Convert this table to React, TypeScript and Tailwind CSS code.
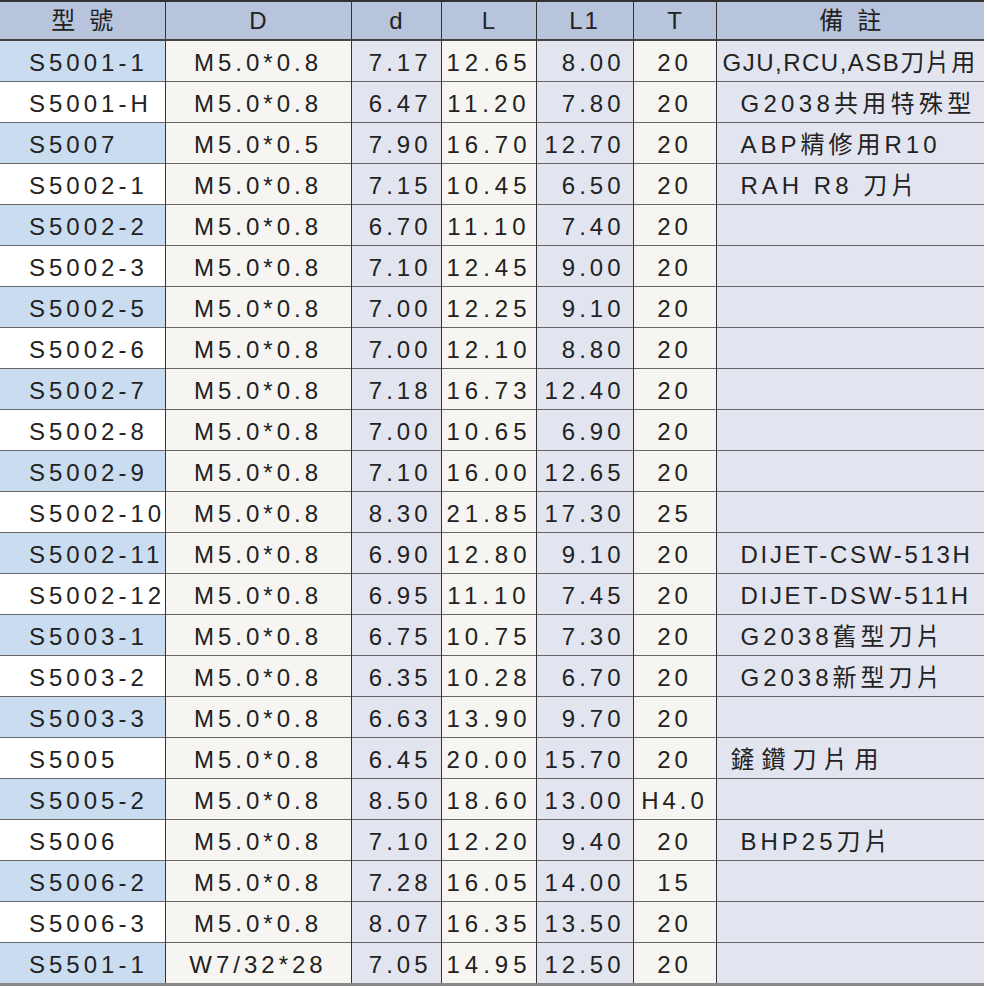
const rows: [string, string, string, string, string, string, string][] = [
  ["S5001-1", "M5.0*0.8", "7.17", "12.65", "8.00", "20", "GJU,RCU,ASB刀片用"],
  ["S5001-H", "M5.0*0.8", "6.47", "11.20", "7.80", "20", "G2038共用特殊型"],
  ["S5007", "M5.0*0.5", "7.90", "16.70", "12.70", "20", "ABP精修用R10"],
  ["S5002-1", "M5.0*0.8", "7.15", "10.45", "6.50", "20", "RAH R8 刀片"],
  ["S5002-2", "M5.0*0.8", "6.70", "11.10", "7.40", "20", ""],
  ["S5002-3", "M5.0*0.8", "7.10", "12.45", "9.00", "20", ""],
  ["S5002-5", "M5.0*0.8", "7.00", "12.25", "9.10", "20", ""],
  ["S5002-6", "M5.0*0.8", "7.00", "12.10", "8.80", "20", ""],
  ["S5002-7", "M5.0*0.8", "7.18", "16.73", "12.40", "20", ""],
  ["S5002-8", "M5.0*0.8", "7.00", "10.65", "6.90", "20", ""],
  ["S5002-9", "M5.0*0.8", "7.10", "16.00", "12.65", "20", ""],
  ["S5002-10", "M5.0*0.8", "8.30", "21.85", "17.30", "25", ""],
  ["S5002-11", "M5.0*0.8", "6.90", "12.80", "9.10", "20", "DIJET-CSW-513H"],
  ["S5002-12", "M5.0*0.8", "6.95", "11.10", "7.45", "20", "DIJET-DSW-511H"],
  ["S5003-1", "M5.0*0.8", "6.75", "10.75", "7.30", "20", "G2038舊型刀片"],
  ["S5003-2", "M5.0*0.8", "6.35", "10.28", "6.70", "20", "G2038新型刀片"],
  ["S5003-3", "M5.0*0.8", "6.63", "13.90", "9.70", "20", ""],
  ["S5005", "M5.0*0.8", "6.45", "20.00", "15.70", "20", "鏟鑽刀片用"],
  ["S5005-2", "M5.0*0.8", "8.50", "18.60", "13.00", "H4.0", ""],
  ["S5006", "M5.0*0.8", "7.10", "12.20", "9.40", "20", "BHP25刀片"],
  ["S5006-2", "M5.0*0.8", "7.28", "16.05", "14.00", "15", ""],
  ["S5006-3", "M5.0*0.8", "8.07", "16.35", "13.50", "20", ""],
  ["S5501-1", "W7/32*28", "7.05", "14.95", "12.50", "20", ""],
];

// remark cell spacing varies a bit from row to row in the catalogue
function remarkClass(i: number) {
  if (i === 0) return "pl-[6px] tracking-[1.5px]";
  if (i === 1) return "pl-[24px] tracking-[4.3px]";
  if (i === 12 || i === 13) return "pl-[24px] tracking-[2.7px]";
  if (i === 17) return "pl-[14px] tracking-[7px]";
  return "pl-[24px] tracking-[4px]";
}

export default function App() {
  return (
    <div
      className="w-[987px] h-[988px] bg-white text-[#222] text-[24px] tracking-[4px]"
      style={{ fontFamily: '"Liberation Sans", "Noto Sans CJK TC", sans-serif' }}
    >
      <table className="w-[984px] table-fixed border-collapse border-t-2 border-t-[#333] border-b-[3px] border-b-[#888]">
        <colgroup>
          <col className="w-[165px]" />
          <col className="w-[186px]" />
          <col className="w-[90px]" />
          <col className="w-[95px]" />
          <col className="w-[97px]" />
          <col className="w-[83px]" />
          <col className="w-[268px]" />
        </colgroup>
        <thead>
          <tr className="h-[39px] bg-[#b8c4dc] border-b-2 border-b-[#444]">
            <th className="font-normal text-center tracking-[14px] pl-[14px]">型號</th>
            <th className="font-normal text-center border-l border-[#333] tracking-normal">D</th>
            <th className="font-normal text-center border-l border-[#333] tracking-normal">d</th>
            <th className="font-normal text-center border-l border-[#333] tracking-normal">L</th>
            <th className="font-normal text-center border-l border-[#333] tracking-[2px]">L1</th>
            <th className="font-normal text-center border-l border-[#333] tracking-normal">T</th>
            <th className="font-normal text-center border-l border-[#333] tracking-[14px] pl-[14px]">備註</th>
          </tr>
        </thead>
        <tbody>
          {rows.map((r, i) => (
            <tr key={r[0]} className="h-[41px] border-t border-[#666]">
              <td className={`pl-[29px] pt-[4px] whitespace-nowrap ${i % 2 === 0 ? "bg-[#c9dcf0]" : "bg-white"}`}>{r[0]}</td>
              <td className="bg-[#f6f5f1] border-l border-[#333] text-center pt-[4px] whitespace-nowrap">{r[1]}</td>
              <td className="bg-[#e2e5ef] border-l border-[#333] text-right pr-[9px] pt-[4px]">{r[2]}</td>
              <td className="bg-[#f6f5f1] border-l border-[#333] text-center pt-[4px] whitespace-nowrap tracking-[5px] pl-[1px]">{r[3]}</td>
              <td className="bg-[#e2e5ef] border-l border-[#333] text-right pr-[8px] pt-[4px] whitespace-nowrap">{r[4]}</td>
              <td className="bg-[#f6f5f1] border-l border-[#333] text-center pt-[4px]">{r[5]}</td>
              <td className={`bg-[#e2e5ef] border-l border-[#333] pt-[4px] whitespace-nowrap ${remarkClass(i)}`}>{r[6]}</td>
            </tr>
          ))}
        </tbody>
      </table>
    </div>
  );
}
